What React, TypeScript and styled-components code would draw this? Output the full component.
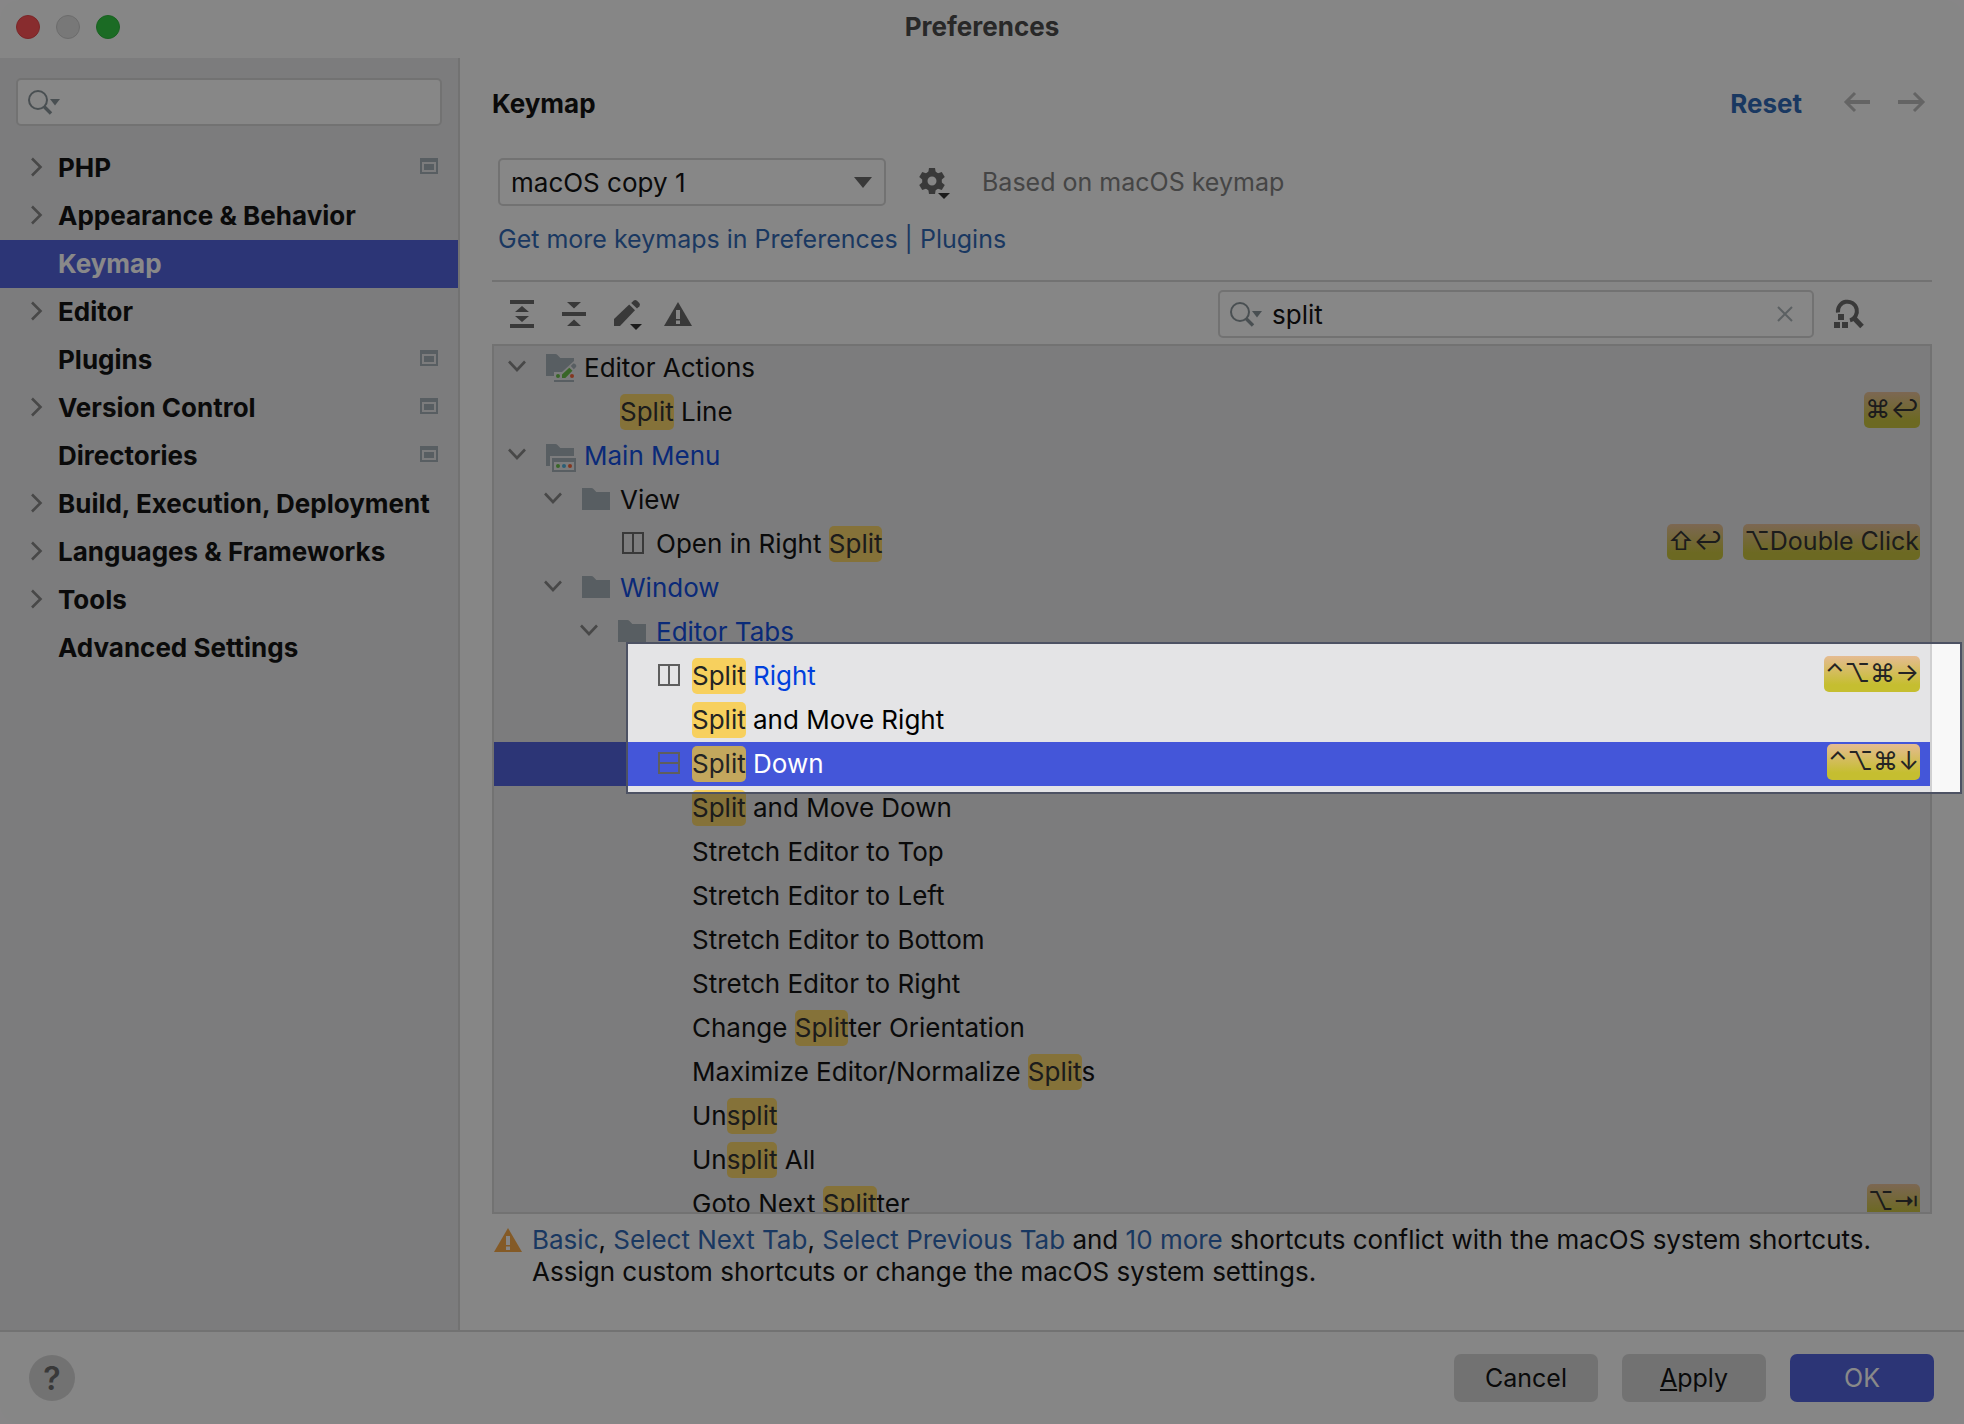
import React from "react";
import styled, { createGlobalStyle } from "styled-components";

const color = {
  window: "#f8f8f8",
  panel: "#e4e4e6",
  line: "#d0d0d1",
  text: "#000000",
  muted: "#767676",
  icon: "#5e5e5e",
  folder: "#9ca8b0",
  link: "#1f5cae",
  changed: "#0040dd",
  selection: "#4456d9",
  match: "#f7d05e",
};

const GlobalStyle = createGlobalStyle`
  * { box-sizing: border-box; }
  body {
    margin: 0;
    color: ${color.text};
    font-family: Inter, "Liberation Sans", sans-serif;
    font-size: 26px;
  }
  button, input, select { font: inherit; color: inherit; }
  svg { display: block; flex: none; }
  a { text-decoration: none; color: ${color.link}; }
`;

const Desktop = styled.div`
  overflow: hidden;
  background: #fbf8fb;
`;

const Window = styled.div`
  height: 100vh;
  display: flex;
  flex-direction: column;
  border-radius: 20px;
  background: ${color.window};
`;

const TitleBar = styled.header`
  flex: none;
  height: 58px;
  display: grid;
  grid-template-columns: 1fr auto 1fr;
  align-items: center;
  padding: 0 16px 4px;
`;

const Lights = styled.div`
  display: flex;
  gap: 16px;
`;

const Light = styled.button<{ $fill: string; $edge: string }>`
  width: 24px;
  height: 24px;
  padding: 0;
  border: 1px solid ${(p) => p.$edge};
  border-radius: 50%;
  background: ${(p) => p.$fill};
`;

const WindowTitle = styled.h1`
  margin: 0;
  font-size: 26px;
  line-height: 32px;
  font-weight: 700;
  color: #3c3c3c;
`;

const Body = styled.div`
  flex: 1;
  min-height: 0;
  display: flex;
`;

const Sidebar = styled.nav`
  flex: 0 0 460px;
  min-width: 0;
  display: flex;
  flex-direction: column;
  gap: 18px;
  padding-top: 20px;
  background: ${color.panel};
  border-right: 2px solid ${color.line};
`;

const Field = styled.label`
  display: flex;
  align-items: center;
  gap: 8px;
  height: 48px;
  padding: 0 18px 0 10px;
  border: 2px solid ${color.line};
  border-radius: 5px;
  background: #fafafa;
`;

const SidebarField = styled(Field)`
  margin: 0 16px;
`;

const ActionField = styled(Field)`
  flex: 0 1 596px;
`;

const TextInput = styled.input`
  flex: 1;
  width: 100%;
  min-width: 0;
  padding: 0;
  border: 0;
  outline: 0;
  background: transparent;
  &::-webkit-search-cancel-button { display: none; }
`;

const PageList = styled.ul`
  margin: 0;
  padding: 0;
  list-style: none;
`;

const PageLink = styled.a<{ $active?: boolean }>`
  display: flex;
  align-items: center;
  height: 48px;
  padding: 0 18px 2px 24px;
  font-weight: 700;
  white-space: nowrap;
  color: ${(p) => (p.$active ? "#ffffff" : color.text)};
  background: ${(p) => (p.$active ? color.selection : "transparent")};
`;

const PageArrow = styled.span`
  flex: none;
  width: 34px;
`;

const PageName = styled.span`
  flex: 1;
`;

const Main = styled.main`
  flex: 1;
  min-width: 0;
  display: flex;
  flex-direction: column;
  padding: 20px 32px 0;
`;

const PageHeader = styled.div`
  flex: none;
  display: flex;
  align-items: center;
  height: 50px;
  padding-right: 4px;
`;

const PageTitle = styled.h2`
  flex: 1;
  margin: 0;
  font-size: 26px;
  font-weight: 700;
`;

const ResetLink = styled.a`
  margin-right: 40px;
  font-weight: 700;
`;

const IconButton = styled.button`
  flex: none;
  padding: 0;
  border: 0;
  background: transparent;
`;

const History = styled.div`
  display: flex;
  gap: 22px;
`;

const SchemeRow = styled.div`
  flex: none;
  display: flex;
  align-items: center;
  margin-top: 30px;
  padding-left: 6px;
`;

const SchemeBox = styled.div`
  display: grid;
  flex: 0 1 388px;
  align-items: center;
  & > * { grid-area: 1 / 1; }
  & > svg { justify-self: end; margin-right: 14px; pointer-events: none; }
`;

const SchemeSelect = styled.select`
  width: 100%;
  height: 48px;
  padding: 0 40px 0 11px;
  border: 2px solid ${color.line};
  border-radius: 5px;
  background: #fafafa;
  appearance: none;
`;

const GearButton = styled(IconButton)`
  margin: 0 30px;
`;

const BasedOn = styled.span`
  font-size: 25px;
  color: ${color.muted};
`;

const MoreLink = styled.a`
  align-self: flex-start;
  margin: 18px 6px 26px;
  font-size: 25px;
  line-height: 30px;
`;

const Toolbar = styled.div`
  flex: none;
  display: flex;
  align-items: center;
  justify-content: space-between;
  gap: 20px;
  padding: 8px 68px 6px 14px;
  border-top: 2px solid ${color.line};
`;

const ToolGroup = styled.div`
  display: flex;
  gap: 20px;
`;

const SearchGroup = styled.div`
  flex: 0 1 646px;
  display: flex;
  align-items: center;
  gap: 18px;
`;

const TreeArea = styled.div`
  position: relative;
  flex: 1;
  min-height: 0;
  display: flex;
`;

const Tree = styled.ul`
  flex: 1;
  margin: 0;
  padding: 0;
  list-style: none;
  overflow: hidden;
  border: 2px solid ${color.line};
  background: ${color.panel};
`;

const TreeRow = styled.li<{ $level: number; $selected?: boolean }>`
  display: flex;
  align-items: center;
  height: 44px;
  padding: 0 10px 0 ${(p) => 8 + p.$level * 36}px;
  white-space: pre;
  color: ${(p) => (p.$selected ? "#ffffff" : color.text)};
  background: ${(p) => (p.$selected ? color.selection : "transparent")};
`;

const ArrowSlot = styled.span`
  flex: none;
  width: 42px;
`;

const IconSlot = styled.span`
  flex: none;
  width: 40px;
`;

const RowLabel = styled.span<{ $changed?: boolean }>`
  flex: 1;
  line-height: 36px;
  color: ${(p) => (p.$changed ? color.changed : "inherit")};
`;

const Match = styled.mark<{ $selected?: boolean }>`
  display: inline-block;
  border-radius: 5px;
  color: #242424;
  background: ${(p) => (p.$selected ? "#c3a75d" : color.match)};
`;

const Shortcuts = styled.span`
  align-self: flex-start;
  display: flex;
  gap: 20px;
  padding-top: 2px;
`;

const Shortcut = styled.kbd`
  height: 36px;
  padding: 0 1px;
  border-radius: 5px;
  font-family: Inter, "DejaVu Sans", sans-serif;
  font-size: 25px;
  line-height: 34px;
  color: #242424;
  background: linear-gradient(#e5bb92, #c5be30 80%);
`;

const Spotlight = styled.div`
  position: absolute;
  z-index: 5;
  top: 298px;
  left: 134px;
  right: -30px;
  height: 152px;
  border: 2px solid #4d5263;
  box-shadow: 0 0 0 4000px rgba(20, 20, 20, 0.5);
  pointer-events: none;
`;

const Conflicts = styled.div`
  flex: none;
  display: flex;
  gap: 8px;
  height: 116px;
  padding-top: 10px;
  line-height: 32px;
`;

const ConflictText = styled.p`
  margin: 0;
`;

const Footer = styled.footer`
  flex: none;
  display: flex;
  align-items: center;
  gap: 24px;
  height: 94px;
  padding: 0 30px 0 29px;
  border-top: 2px solid ${color.line};
`;

const HelpButton = styled.button`
  width: 46px;
  height: 46px;
  margin-right: auto;
  padding: 0;
  border: 0;
  border-radius: 50%;
  font-size: 32px;
  font-weight: 600;
  color: ${color.icon};
  background: ${color.line};
`;

const DialogButton = styled.button<{ $primary?: boolean }>`
  width: 144px;
  height: 48px;
  padding: 0;
  border: 0;
  border-radius: 7px;
  font-size: 25px;
  color: ${(p) => (p.$primary ? "#ffffff" : color.text)};
  background: ${(p) => (p.$primary ? color.selection : color.line)};
`;

const SearchIcon = () => (
  <svg width="34" height="28" viewBox="0 0 34 28" fill="none" stroke="#7f8b91">
    <circle cx="10" cy="12" r="9" strokeWidth="2" />
    <path d="M16 18.5 23 25.5" strokeWidth="3.4" />
    <path d="M22 11h10l-5 6.5z" fill="#7f8b91" stroke="none" />
  </svg>
);

const ClearIcon = () => (
  <svg width="18" height="18" viewBox="0 0 18 18" stroke="#a3acb1" strokeWidth="2">
    <path d="M2 2l14 14M16 2 2 16" />
  </svg>
);

const ArrowRight = () => (
  <svg width="24" height="22" viewBox="0 0 24 22" fill="none" stroke="#7c7c7c" strokeWidth="2.6">
    <path d="M8 2.5 16.5 11 8 19.5" />
  </svg>
);

const ArrowDown = () => (
  <svg width="32" height="32" viewBox="0 0 32 32" fill="none" stroke="#7c7c7c" strokeWidth="2.6">
    <path d="M7 9.500 15 18 23 9.500" />
  </svg>
);

const ProjectMark = () => (
  <svg width="20" height="18" viewBox="0 0 20 18" fill={color.folder}>
    <path fillRule="evenodd" d="M0 0h18v16H0zM2 4v10h14V4z" />
    <path d="M4 6h10v6H4z" />
  </svg>
);

const BackIcon = () => (
  <svg width="32" height="32" viewBox="0 0 32 32" fill="none" stroke="#b4b4b4" strokeWidth="3">
    <path d="M4 15H28" strokeWidth="4" />
    <path d="M13 6 4 15l9 9" />
  </svg>
);

const ForwardIcon = () => (
  <svg width="32" height="32" viewBox="0 0 32 32" fill="none" stroke="#b4b4b4" strokeWidth="3">
    <path d="M2 15H26" strokeWidth="4" />
    <path d="M18 6l9 9-9 9" />
  </svg>
);

const DropIcon = () => (
  <svg width="18" height="14" viewBox="0 0 18 14" fill={color.icon}>
    <path d="M0 2h18L9 13z" />
  </svg>
);

const GearIcon = () => (
  <svg width="36" height="36" viewBox="0 0 36 36" fill={color.icon}>
    <circle cx="16" cy="17" r="7.200" fill="none" stroke={color.icon} strokeWidth="5.400" />
    {[0, 60, 120, 180, 240, 300].map((turn) => (
      <path key={turn} d="M13 4h6l1 6h-8z" transform={`rotate(${turn} 16 17)`} />
    ))}
    <path d="M22 29h12l-6 6z" fill="#242424" />
  </svg>
);

const ExpandIcon = () => (
  <svg width="32" height="32" viewBox="0 0 32 32" fill={color.icon}>
    <path d="M4 2h24v4H4zM4 26h24v4H4zM16 8l7 6H9zM9 18h14l-7 6z" />
  </svg>
);

const CollapseIcon = () => (
  <svg width="32" height="32" viewBox="0 0 32 32" fill={color.icon}>
    <path d="M4 14h24v4H4zM9 4h14l-7 6.500zM16 21.500l7 6.500H9z" />
  </svg>
);

const EditIcon = () => (
  <svg width="32" height="32" viewBox="0 0 32 32" fill={color.icon}>
    <path d="M4 28v-7L19.200 6.400l5.800 5.800L10 28z" />
    <path d="M21.200 5 23.800 2.600Q25.300 1.500 27 2.800L29.300 5Q30.600 6.600 29.400 8.200L27 10.400z" />
    <path d="M20 26h12l-6 6z" fill="#242424" />
  </svg>
);

const WarningIcon = ({ fill }: { fill: string }) => (
  <svg width="32" height="32" viewBox="0 0 32 32">
    <path d="M16 4l14 24H2z" fill={fill} />
    <path d="M14 12h4v9h-4zM14 22.500h4V26h-4z" fill={color.window} />
  </svg>
);

const FindShortcutIcon = () => (
  <svg width="32" height="32" viewBox="0 0 32 32" fill="none" stroke={color.icon}>
    <path d="M6 14.500A9.500 9.500 0 1 1 18 22.300" strokeWidth="4" />
    <path d="M21 19 30 28.500" strokeWidth="5" />
    <path d="M6 16h6v6H6zM2 24h6v6H2zM10 24h6v6h-6z" fill={color.icon} stroke="none" />
  </svg>
);

const FolderIcon = () => (
  <svg width="32" height="32" viewBox="0 0 32 32" fill={color.folder}>
    <path d="M2 4h9.500q1 0 2 1l2.800 3H30v18H2z" />
  </svg>
);

const ActionsFolderIcon = () => (
  <svg width="34" height="32" viewBox="0 0 34 32" fill={color.folder}>
    <path d="M2 2h9.500q1 0 2 1l2.800 3H30v3L18 20h-8v4H2z" />
    <path d="M10 28h20v2H10zM26.800 14l2.400-2.400q1-.6 2 .4l.8 1q.8 1 0 2l-2.200 2.200z" />
    <path d="M18 26v-3.500l7.300-6.700 3.200 3-7.200 7.200z" fill="#5fb83c" />
    <circle cx="14" cy="24" r="2" fill="#5fb83c" />
    <circle cx="28" cy="24" r="2" fill="#f2592a" />
  </svg>
);

const MenuFolderIcon = () => (
  <svg width="34" height="32" viewBox="0 0 34 32" fill={color.folder}>
    <path d="M2 4h9.500q1 0 2 1l2.800 3H30v8H6v10H2z" />
    <path fillRule="evenodd" d="M8 18h24v14H8zM10 22v8h20v-8z" />
    <circle cx="14" cy="26" r="2" fill="#5fb83c" />
    <circle cx="20" cy="26" r="2" fill="#40a8d8" />
    <circle cx="26" cy="26" r="2" fill="#f2592a" />
  </svg>
);

const SplitIcon = ({ line }: { line: string }) => (
  <svg width="32" height="32" viewBox="0 0 32 32" fill="none" stroke="#5e5e5e" strokeWidth="2">
    <path d={`M7 5h20v20H7z${line}`} />
  </svg>
);

const pages = [
  { name: "PHP", group: true, project: true },
  { name: "Appearance & Behavior", group: true },
  { name: "Keymap", active: true },
  { name: "Editor", group: true },
  { name: "Plugins", project: true },
  { name: "Version Control", group: true, project: true },
  { name: "Directories", project: true },
  { name: "Build, Execution, Deployment", group: true },
  { name: "Languages & Frameworks", group: true },
  { name: "Tools", group: true },
  { name: "Advanced Settings" },
];

type Action = {
  name: string;
  level: number;
  icon?: React.ReactNode;
  open?: boolean;
  changed?: boolean;
  selected?: boolean;
  keys?: string[];
};

const right = <SplitIcon line="M17 5v20" />;
const down = <SplitIcon line="M7 15h20" />;

const actions: Action[] = [
  { name: "Editor Actions", level: 0, open: true, icon: <ActionsFolderIcon /> },
  { name: "Split Line", level: 1, keys: ["⌘↩"] },
  { name: "Main Menu", level: 0, open: true, changed: true, icon: <MenuFolderIcon /> },
  { name: "View", level: 1, open: true, icon: <FolderIcon /> },
  { name: "Open in Right Split", level: 2, icon: right, keys: ["⇧↩", "⌥Double Click"] },
  { name: "Window", level: 1, open: true, changed: true, icon: <FolderIcon /> },
  { name: "Editor Tabs", level: 2, open: true, changed: true, icon: <FolderIcon /> },
  { name: "Split Right", level: 3, changed: true, icon: right, keys: ["⌃⌥⌘→"] },
  { name: "Split and Move Right", level: 3 },
  { name: "Split Down", level: 3, selected: true, icon: down, keys: ["⌃⌥⌘↓"] },
  { name: "Split and Move Down", level: 3 },
  { name: "Stretch Editor to Top", level: 3 },
  { name: "Stretch Editor to Left", level: 3 },
  { name: "Stretch Editor to Bottom", level: 3 },
  { name: "Stretch Editor to Right", level: 3 },
  { name: "Change Splitter Orientation", level: 3 },
  { name: "Maximize Editor/Normalize Splits", level: 3 },
  { name: "Unsplit", level: 3 },
  { name: "Unsplit All", level: 3 },
  { name: "Goto Next Splitter", level: 3, keys: ["⌥⇥"] },
];

const withMatches = (name: string, selected?: boolean) =>
  name.split(/(split)/i).map((part, i) =>
    part.toLowerCase() === "split" ? (
      <Match key={i} $selected={selected}>{part}</Match>
    ) : (
      part
    )
  );

export default function App() {
  return (
    <Desktop>
      <GlobalStyle />
      <Window>
        <TitleBar>
          <Lights>
            <Light aria-label="Close" $fill="#fd4549" $edge="#e0383c" />
            <Light aria-label="Minimize" $fill="#dcdcdc" $edge="#c4c4c4" />
            <Light aria-label="Zoom" $fill="#22c334" $edge="#1fae2e" />
          </Lights>
          <WindowTitle>Preferences</WindowTitle>
        </TitleBar>

        <Body>
          <Sidebar>
            <SidebarField>
              <SearchIcon />
              <TextInput type="search" aria-label="Search settings" />
            </SidebarField>
            <PageList>
              {pages.map((page) => (
                <li key={page.name}>
                  <PageLink href="#" $active={page.active}>
                    <PageArrow>{page.group && <ArrowRight />}</PageArrow>
                    <PageName>{page.name}</PageName>
                    {page.project && <ProjectMark />}
                  </PageLink>
                </li>
              ))}
            </PageList>
          </Sidebar>

          <Main>
            <PageHeader>
              <PageTitle>Keymap</PageTitle>
              <ResetLink href="#">Reset</ResetLink>
              <History>
                <IconButton aria-label="Back"><BackIcon /></IconButton>
                <IconButton aria-label="Forward"><ForwardIcon /></IconButton>
              </History>
            </PageHeader>

            <SchemeRow>
              <SchemeBox>
                <SchemeSelect aria-label="Keymap scheme" defaultValue="copy">
                  <option value="copy">macOS copy 1</option>
                </SchemeSelect>
                <DropIcon />
              </SchemeBox>
              <GearButton aria-label="Scheme actions"><GearIcon /></GearButton>
              <BasedOn>Based on macOS keymap</BasedOn>
            </SchemeRow>
            <MoreLink href="#">Get more keymaps in Preferences | Plugins</MoreLink>

            <Toolbar>
              <ToolGroup>
                <IconButton aria-label="Expand all"><ExpandIcon /></IconButton>
                <IconButton aria-label="Collapse all"><CollapseIcon /></IconButton>
                <IconButton aria-label="Edit shortcut"><EditIcon /></IconButton>
                <IconButton aria-label="Show conflicts"><WarningIcon fill={color.icon} /></IconButton>
              </ToolGroup>
              <SearchGroup>
                <ActionField>
                  <SearchIcon />
                  <TextInput type="search" aria-label="Search actions" defaultValue="split" />
                  <IconButton aria-label="Clear search"><ClearIcon /></IconButton>
                </ActionField>
                <IconButton aria-label="Find by shortcut"><FindShortcutIcon /></IconButton>
              </SearchGroup>
            </Toolbar>

            <TreeArea>
              <Tree role="tree">
                {actions.map((action) => (
                  <TreeRow
                    key={action.name}
                    role="treeitem"
                    aria-selected={!!action.selected}
                    $level={action.level}
                    $selected={action.selected}
                  >
                    <ArrowSlot>{action.open && <ArrowDown />}</ArrowSlot>
                    <IconSlot>{action.icon}</IconSlot>
                    <RowLabel $changed={action.changed}>
                      {withMatches(action.name, action.selected)}
                    </RowLabel>
                    {action.keys && (
                      <Shortcuts>
                        {action.keys.map((keys) => (
                          <Shortcut key={keys}>{keys}</Shortcut>
                        ))}
                      </Shortcuts>
                    )}
                  </TreeRow>
                ))}
              </Tree>
              <Spotlight />
            </TreeArea>

            <Conflicts>
              <WarningIcon fill="#f5a038" />
              <ConflictText>
                <a href="#">Basic</a>, <a href="#">Select Next Tab</a>, <a href="#">Select Previous Tab</a> and{" "}
                <a href="#">10 more</a> shortcuts conflict with the macOS system shortcuts.
                <br />
                Assign custom shortcuts or change the macOS system settings.
              </ConflictText>
            </Conflicts>
          </Main>
        </Body>

        <Footer>
          <HelpButton aria-label="Help">?</HelpButton>
          <DialogButton>Cancel</DialogButton>
          <DialogButton><u>A</u>pply</DialogButton>
          <DialogButton $primary>OK</DialogButton>
        </Footer>
      </Window>
    </Desktop>
  );
}
